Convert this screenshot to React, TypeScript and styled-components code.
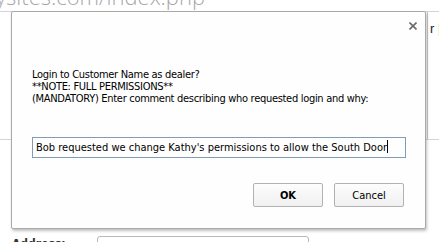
import React from "react";
import styled, { createGlobalStyle } from "styled-components";

const Global = createGlobalStyle`
  html, body { margin: 0; padding: 0; background: #fff; overflow: hidden; }
  body { font-family: "DejaVu Sans Condensed", "DejaVu Sans", sans-serif; }
`;

const Page = styled.div`
  position: relative;
  width: 439px;
  height: 242px;
  overflow: hidden;
  display: flex;
  flex-direction: column;
`;

const UrlBar = styled.div`
  height: 11px;
  border-bottom: 1px solid #d4d4d4;
  overflow: hidden;
`;

const UrlText = styled.div`
  font-family: "Open Sans", sans-serif;
  font-size: 22px;
  font-weight: 300;
  color: #a8a8a8;
  line-height: 1;
  margin-top: -15px;
  margin-left: -4px;
  white-space: nowrap;
`;

const Content = styled.div`
  display: grid;
  grid-template-columns: 428px 1fr;
  height: 127px;
  border-bottom: 1px solid #d4d4d4;
`;

const MainCell = styled.div`
  border-right: 1px solid #c8c8c8;
`;

const SideCell = styled.div`
  padding: 9px 0 0 2px;
  font-family: "Liberation Sans", sans-serif;
  font-size: 13px;
  color: #222;
  white-space: nowrap;
`;

const Spacer = styled.div`
  flex: 1;
`;

const AddressRow = styled.div`
  display: flex;
  align-items: flex-start;
  height: 6px;
  padding-left: 12px;
`;

const AddressLabel = styled.div`
  width: 85px;
  font-family: "DejaVu Sans Condensed", "DejaVu Sans", sans-serif;
  font-weight: bold;
  font-size: 12px;
  color: #333;
  line-height: 1;
  margin-top: 2px;
`;

const AddressInput = styled.div`
  width: 210px;
  height: 20px;
  border: 1px solid #b8b8b8;
  border-radius: 3px 3px 0 0;
`;

const Dialog = styled.div`
  position: absolute;
  left: 11px;
  top: 11px;
  width: 415px;
  height: 218px;
  box-sizing: border-box;
  background: #fefefe;
  border: 1px solid #a9a9a9;
  border-radius: 2px;
  box-shadow: 1px 2px 3px rgba(0, 0, 0, 0.25);
  display: flex;
  flex-direction: column;
  padding: 0 20px 0 20px;
`;

const TitleBar = styled.div`
  display: flex;
  justify-content: flex-end;
  height: 57px;
  padding-top: 9px;
  box-sizing: border-box;
  margin-right: -13px;
`;

const Close = styled.button`
  width: 10px;
  height: 10px;
  padding: 0;
  border: 0;
  background: none;
  display: flex;
  align-items: center;
  justify-content: center;
`;

const Message = styled.div`
  font-family: "DejaVu Sans Condensed", "DejaVu Sans", sans-serif;
  font-size: 11px;
  line-height: 12px;
  letter-spacing: -0.3px;
  color: #000;
  white-space: nowrap;
`;

const Comment = styled.div`
  margin-top: 32px;
  height: 21px;
  width: 374px;
  box-sizing: border-box;
  border: 1px solid #7f9db9;
  font-size: 11px;
  line-height: 19px;
  padding-left: 3px;
  color: #000;
  white-space: nowrap;
`;

const Caret = styled.span`
  display: inline-block;
  width: 1px;
  height: 13px;
  background: #000;
  vertical-align: -2px;
`;

const Buttons = styled.div`
  display: flex;
  justify-content: flex-end;
  gap: 11px;
  margin-top: 25px;
  padding-right: 1px;
`;

const Button = styled.button<{ $primary?: boolean }>`
  width: 70px;
  height: 24px;
  box-sizing: border-box;
  border: 1px solid #b2b2b2;
  border-radius: 2px;
  background: linear-gradient(#fdfdfd, #f0f0f0);
  font-family: "DejaVu Sans Condensed", "DejaVu Sans", sans-serif;
  font-size: 11px;
  font-weight: ${(p) => (p.$primary ? "bold" : "normal")};
  color: #000;
  padding: 0;
`;

export default function App() {
  return (
    <>
      <Global />
      <Page>
        <UrlBar>
          <UrlText>ysites.com/index.php</UrlText>
        </UrlBar>
        <Content>
          <MainCell />
          <SideCell>r |</SideCell>
        </Content>
        <Spacer />
        <AddressRow>
          <AddressLabel>Address:</AddressLabel>
          <AddressInput />
        </AddressRow>
        <Dialog>
          <TitleBar>
            <Close aria-label="close">
              <svg width="8" height="8" viewBox="0 0 8 8">
                <path d="M0.5 0.5 L7.5 7.5 M7.5 0.5 L0.5 7.5" stroke="#6a6a6a" strokeWidth="1.6" />
              </svg>
            </Close>
          </TitleBar>
          <Message>
            Login to Customer Name as dealer?
            <br />
            **NOTE: FULL PERMISSIONS**
            <br />
            (MANDATORY) Enter comment describing who requested login and why:
          </Message>
          <Comment>
            Bob requested we change Kathy's permissions to allow the South Door
            <Caret />
          </Comment>
          <Buttons>
            <Button $primary>OK</Button>
            <Button>Cancel</Button>
          </Buttons>
        </Dialog>
      </Page>
    </>
  );
}
